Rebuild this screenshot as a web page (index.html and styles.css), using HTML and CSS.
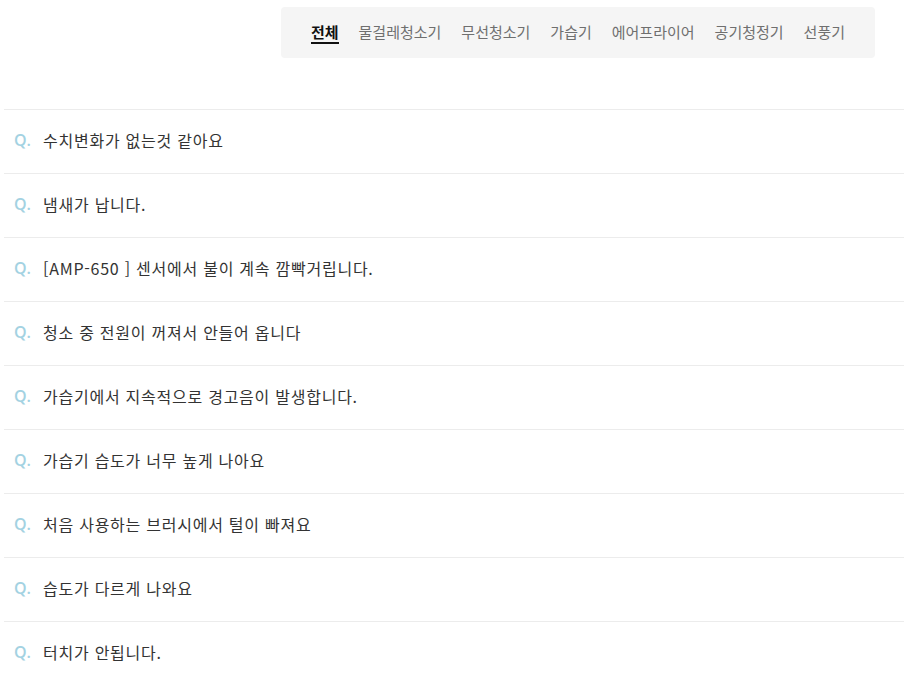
FILE: index.html
```html
<!DOCTYPE html>
<html lang="ko">
<head>
<meta charset="utf-8">
<link rel="stylesheet" href="styles.css">
</head>
<body>
<div class="page">
  <div class="tabs-wrap">
    <nav class="tabs">
      <a class="tab active">전체</a>
      <a class="tab">물걸레청소기</a>
      <a class="tab">무선청소기</a>
      <a class="tab">가습기</a>
      <a class="tab">에어프라이어</a>
      <a class="tab">공기청정기</a>
      <a class="tab">선풍기</a>
    </nav>
  </div>
  <ul class="faq">
    <li class="item"><span class="q">Q.</span><span class="text">수치변화가 없는것 같아요</span></li>
    <li class="item"><span class="q">Q.</span><span class="text">냄새가 납니다.</span></li>
    <li class="item"><span class="q">Q.</span><span class="text">[AMP-650 ] 센서에서 불이 계속 깜빡거립니다.</span></li>
    <li class="item"><span class="q">Q.</span><span class="text">청소 중 전원이 꺼져서 안들어 옵니다</span></li>
    <li class="item"><span class="q">Q.</span><span class="text">가습기에서 지속적으로 경고음이 발생합니다.</span></li>
    <li class="item"><span class="q">Q.</span><span class="text">가습기 습도가 너무 높게 나아요</span></li>
    <li class="item"><span class="q">Q.</span><span class="text">처음 사용하는 브러시에서 털이 빠져요</span></li>
    <li class="item"><span class="q">Q.</span><span class="text">습도가 다르게 나와요</span></li>
    <li class="item"><span class="q">Q.</span><span class="text">터치가 안됩니다.</span></li>
  </ul>
</div>
</body>
</html>
```

FILE: styles.css
```css
* { box-sizing: border-box; }
html, body { margin: 0; padding: 0; background: #fff; }
body {
  font-family: "Noto Sans CJK KR", "Noto Sans", sans-serif;
  color: #333;
}
.page { width: 904px; overflow: hidden; }
.tabs-wrap {
  display: flex;
  justify-content: flex-end;
  padding: 7px 29px 0 0;
  height: 109px;
}
.tabs {
  display: flex;
  align-items: center;
  gap: 20px;
  height: 51px;
  padding: 0 30px 2px;
  background: #f5f5f5;
  border-radius: 4px;
}
.tab {
  position: relative;
  font-size: 15px;
  color: #6f6f6f;
  letter-spacing: 0;
  line-height: 22px;
  cursor: pointer;
}
.tab.active {
  color: #111;
  font-weight: 700;
}
.tab.active::after {
  content: "";
  position: absolute;
  left: 0; right: 0;
  bottom: -1px;
  height: 2px;
  background: #111;
}
.faq {
  list-style: none;
  margin: 0 0 0 4px;
  padding: 0;
}
.item {
  display: flex;
  align-items: center;
  height: 64px;
  border-top: 1px solid #ececec;
  padding: 0 0 3px 10px;
  font-size: 16px;
}
.q {
  color: #a3d2e2;
  font-weight: 600;
  width: 29px;
  font-family: "Open Sans", "Noto Sans", sans-serif;
}
.text {
  color: #333;
  letter-spacing: 0.75px;
}
```
